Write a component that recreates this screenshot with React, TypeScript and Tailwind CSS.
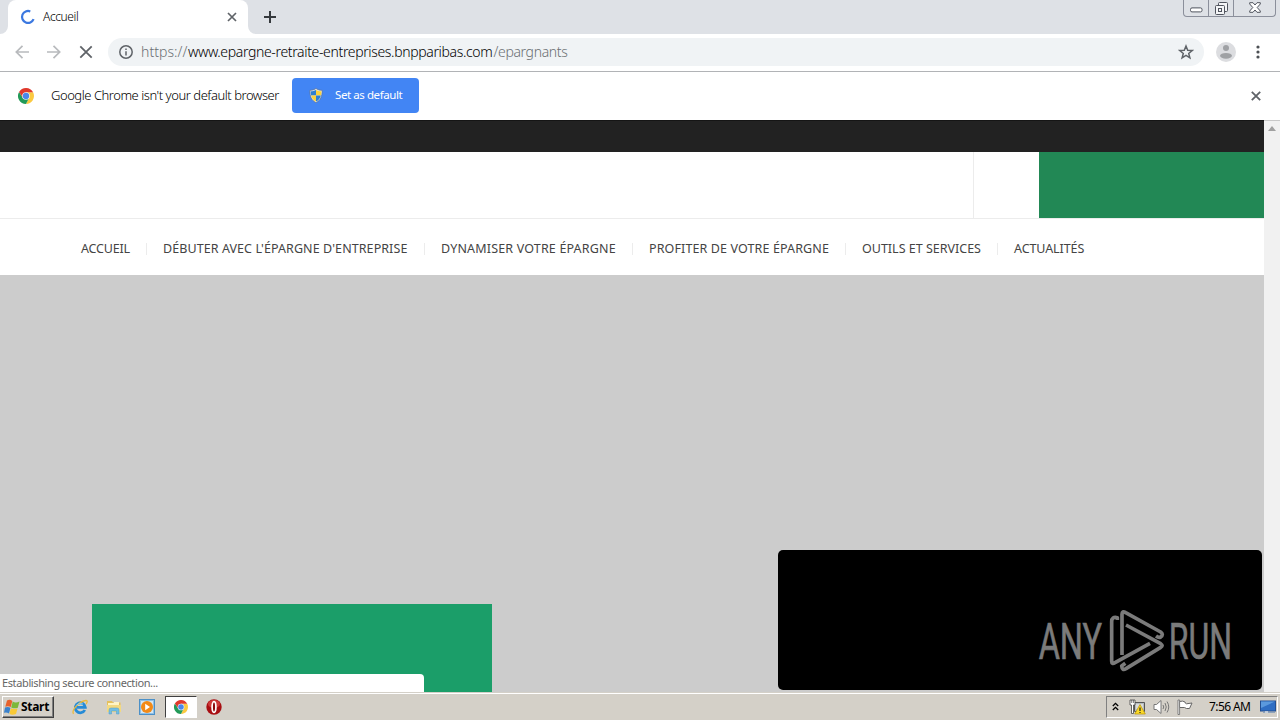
import type { ReactNode } from "react";

const NAV_ITEMS = [
  { label: "ACCUEIL", box: "w-[82px] tracking-[-0.2px]" },
  { label: "DÉBUTER AVEC L'ÉPARGNE D'ENTREPRISE", box: "w-[278px] tracking-[0.08px]" },
  { label: "DYNAMISER VOTRE ÉPARGNE", box: "w-[208px] tracking-[0.17px]" },
  { label: "PROFITER DE VOTRE ÉPARGNE", box: "w-[213px] tracking-[0.12px]" },
  { label: "OUTILS ET SERVICES", box: "w-[152px]" },
  { label: "ACTUALITÉS", box: "w-[90px] tracking-[-0.1px]" },
];

function ChromeLogo({ className }: { className: string }) {
  return (
    <svg viewBox="0 0 48 48" className={className}>
      <path d="M24 13 H45.3 A24 24 0 0 1 24 48 L33.5 29.5 Z" fill="#fbc940" />
      <path d="M14.5 29.5 L3.2 12 A24 24 0 0 0 24 48 L33.5 29.5 Z" fill="#229a58" />
      <path d="M3.2 12 A24 24 0 0 1 45.3 13 H24 L14.5 29.5 Z" fill="#e0392c" />
      <circle cx="24" cy="24" r="11.5" fill="#f4f6fa" />
      <circle cx="24" cy="24" r="9.500" fill="#4a86ea" />
    </svg>
  );
}

function Shield() {
  return (
    <svg viewBox="0 0 14 16" className="h-[15px] w-[14px]">
      <path d="M7 .5 C9 2 11 2.500 13.500 2.500 C13.500 9 12 13 7 15.500 C2 13 .5 9 .5 2.500 C3 2.500 5 2 7 .5Z" fill="#e8eef5" stroke="#68717a" strokeWidth=".7" />
      <path d="M7 2 V8 H1.800 C1.400 6.500 1.300 5 1.300 3.500 C3.500 3.500 5 3 7 2Z" fill="#2f7fd0" />
      <path d="M7 2 V8 H12.200 C12.600 6.500 12.700 5 12.700 3.500 C10.500 3.500 9 3 7 2Z" fill="#fbd23c" />
      <path d="M7 14.400 V8 H1.800 C2.500 11 4 13 7 14.400Z" fill="#fbd23c" />
      <path d="M7 14.400 V8 H12.200 C11.500 11 10 13 7 14.400Z" fill="#2f7fd0" />
    </svg>
  );
}

function TabStrip() {
  return (
    <div className="flex h-[34px] shrink-0 bg-[#dee1e6]">
      <svg viewBox="0 0 8 8" className="h-2 w-2 self-end">
        <path d="M8 0 V8 H0 A8 8 0 0 0 8 0Z" fill="#fff" />
      </svg>
      <div className="flex w-[240px] items-center rounded-t-lg bg-white pl-3">
        <svg viewBox="0 0 16 16" className="size-4" fill="none">
          <path d="M10.300 2.400 A6 6 0 1 0 13.600 10.200" stroke="#3b78e0" strokeWidth="2.200" />
        </svg>
        <span className="ml-[7px] w-[184px] text-[12px] leading-4 font-light tracking-[-0.4px] text-black">Accueil</span>
        <svg viewBox="0 0 10 10" className="size-[10px]">
          <path d="M1 1 L9 9 M9 1 L1 9" stroke="#5f6368" strokeWidth="1.700" />
        </svg>
      </div>
      <svg viewBox="0 0 8 8" className="h-2 w-2 self-end">
        <path d="M0 0 V8 H8 A8 8 0 0 1 0 0Z" fill="#fff" />
      </svg>
      <svg viewBox="0 0 12 12" className="mt-[11px] ml-2 size-3">
        <path d="M6 0 V12 M0 6 H12" stroke="#35393d" strokeWidth="2" />
      </svg>
      <div className="mr-1 ml-auto flex h-[17px] w-[93px] rounded-b-[4px] border border-t-0 border-[#8b8f9b] text-[#50545e]">
        <div className="flex w-[25px] justify-center border-r border-[#8b8f9b]">
          <svg viewBox="0 0 13 6" className="mt-[7px] h-[6px] w-[13px]">
            <rect x=".5" y=".9" width="11.500" height="4" rx="1.500" fill="#fff" stroke="currentColor" />
          </svg>
        </div>
        <div className="flex w-[25px] justify-center border-r border-[#8b8f9b]">
          <svg viewBox="0 0 13 13" className="mt-[2px] size-[13px]" fill="#f4f5f7" stroke="currentColor">
            <rect x="3.500" y=".5" width="9" height="9" rx="1" />
            <rect x=".5" y="3.500" width="9" height="9" rx="1" />
            <rect x="3.500" y="6.500" width="3" height="3" />
          </svg>
        </div>
        <div className="flex flex-1 justify-center">
          <svg viewBox="0 0 12 11" className="mt-[2px] h-[11px] w-3">
            <path d="M.7 .7 H4 L6 3 L8 .7 H11.300 V2 L8.200 5.500 L11.300 9 V10.300 H8 L6 8 L4 10.300 H.7 V9 L3.800 5.500 L.7 2Z" fill="#fff" stroke="currentColor" strokeWidth="1" />
          </svg>
        </div>
      </div>
    </div>
  );
}

function Toolbar() {
  return (
    <div className="flex h-[38px] shrink-0 items-center border-b border-[#b1b3b6] bg-white pb-px">
      <div className="flex w-[108px] gap-[18px] pl-[15px]">
        <svg viewBox="0 0 14 14" className="size-[14px]" fill="none" stroke="#b8babd" strokeWidth="1.700">
          <path d="M14 7 H1.500 M7.500 .8 L1.300 7 L7.500 13.200" />
        </svg>
        <svg viewBox="0 0 14 14" className="size-[14px]" fill="none" stroke="#b8babd" strokeWidth="1.700">
          <path d="M0 7 H12.500 M6.500 .8 L12.700 7 L6.500 13.200" />
        </svg>
        <svg viewBox="0 0 14 14" className="size-[14px]" fill="none" stroke="#5f6368" strokeWidth="1.800">
          <path d="M1.300 1.300 L12.700 12.700 M12.700 1.300 L1.300 12.700" />
        </svg>
      </div>
      <div className="flex h-7 w-[1096px] items-center rounded-full bg-[#f0f3f5] pr-[10px] pl-[11px]">
        <svg viewBox="0 0 14 14" className="size-[14px] shrink-0" fill="none" stroke="#5f6368">
          <circle cx="7" cy="7" r="6.200" strokeWidth="1.500" />
          <path d="M7 6.200 V10.600 M7 3.400 V5" strokeWidth="1.500" />
        </svg>
        <div className="ml-2 flex flex-1 text-[14px] leading-5 font-light whitespace-pre">
          <span className="w-[47px] tracking-[0.05px] text-[#6b6f73]">https://</span>
          <span className="w-[305.500px] tracking-[-0.350px] text-black">www.epargne-retraite-entreprises.bnpparibas.com</span>
          <span className="tracking-[-0.35px] text-[#6b6f73]">/epargnants</span>
        </div>
        <svg viewBox="0 0 16 16" className="size-4" fill="none">
          <path d="M8 2 L9.700 6.200 L14.200 6.500 L10.700 9.400 L11.900 13.800 L8 11.400 L4.100 13.800 L5.300 9.400 L1.800 6.500 L6.300 6.200Z" stroke="#5f6368" strokeWidth="1.500" />
        </svg>
      </div>
      <svg viewBox="0 0 20 20" className="ml-3 size-5">
        <circle cx="10" cy="10" r="10" fill="#dcdde0" />
        <circle cx="10" cy="6" r="3" fill="#9fa1a4" />
        <ellipse cx="10" cy="13.800" rx="6" ry="2.900" fill="#9fa1a4" />
      </svg>
      <svg viewBox="0 0 4 14" className="ml-5 h-[14px] w-1" fill="#4c5054">
        <circle cx="2" cy="2" r="1.600" />
        <circle cx="2" cy="7" r="1.600" />
        <circle cx="2" cy="12" r="1.600" />
      </svg>
    </div>
  );
}

function DefaultBrowserBar() {
  return (
    <div className="flex h-12 shrink-0 items-center bg-white">
      <ChromeLogo className="ml-[18px] size-4" />
      <span className="mb-[2px] ml-[17px] w-[241px] text-[13px] leading-5 font-light tracking-[-0.46px] whitespace-nowrap text-black">
        Google Chrome isn't your default browser
      </span>
      <button className="mb-px flex h-[35px] w-[127px] items-center rounded-[4px] bg-[#4285f4] pl-[17px] text-white">
        <Shield />
        <span className="mb-px ml-3 text-[11.500px] leading-4 tracking-[-0.42px] whitespace-nowrap">Set as default</span>
      </button>
      <svg viewBox="0 0 10 10" className="mr-[19px] ml-auto size-[10px]">
        <path d="M.8 .8 L9.200 9.200 M9.200 .8 L.8 9.200" stroke="#5f6368" strokeWidth="1.800" />
      </svg>
    </div>
  );
}

function SitePage() {
  return (
    <div className="flex flex-1 flex-col overflow-hidden bg-white">
      <div className="h-8 shrink-0 border-t border-[#151515] bg-[#222]" />
      <div className="flex h-[67px] shrink-0 border-b border-[#ececec]">
        <div className="w-[974px] border-r border-[#ececec]" />
        <div className="w-[65px]" />
        <div className="flex-1 bg-[#228855]" />
      </div>
      <nav className="flex h-14 shrink-0 items-center pt-1 pl-[81px]">
        {NAV_ITEMS.map((item, i) => (
          <div key={item.label} className={`flex shrink-0 items-center ${item.box}`}>
            <span className="text-[12.500px] leading-5 whitespace-nowrap text-[#444]">{item.label}</span>
            {i < NAV_ITEMS.length - 1 && <span className="mr-4 ml-auto h-3 w-px bg-[#ececec]" />}
          </div>
        ))}
      </nav>
      <main className="flex flex-1 items-end bg-[#ccc] pl-[92px]">
        <div className="h-[88px] w-[400px] bg-[#1b9e69]" />
      </main>
    </div>
  );
}

function AnyRunBadge() {
  return (
    <div className="absolute top-[550px] left-[778px] flex h-[140px] w-[484px] items-end justify-end rounded-[5px] bg-black pr-[21px] pb-[8px]">
      <svg viewBox="27 -5 636 252" className="h-[84px] w-[212px] overflow-visible">
        <g fill="#7b7b7b" stroke="#7b7b7b" strokeWidth="2" fontFamily="Roboto, sans-serif" fontSize="152">
          <text x="56" y="179" textLength="190" lengthAdjust="spacingAndGlyphs">ANY</text>
          <text x="446" y="179" textLength="190" lengthAdjust="spacingAndGlyphs">RUN</text>
        </g>
        <g fill="none" stroke="#7b7b7b" strokeWidth="11" strokeLinejoin="round">
          <path d="M292 61 V54 Q275 50 275 66 V185 Q275 195 285 189 L390 131" />
          <path d="M306 166 V44 Q306 32 317 39 L422 97 Q432 105 422 112 Q416 115 408 109" />
          <path d="M318 76 L422 132 Q431 138 422 143 L318 207 Q306 214 305 199 L316 191" />
        </g>
      </svg>
    </div>
  );
}

function TaskItem({ children, active = false }: { children: ReactNode; active?: boolean }) {
  return (
    <div
      className={
        active
          ? "flex h-[22px] w-8 items-center justify-center border border-t-[#404040] border-r-white border-b-white border-l-[#404040] bg-white"
          : "flex h-[22px] w-8 items-center justify-center"
      }
    >
      {children}
    </div>
  );
}

function Taskbar() {
  return (
    <div className="h-7 shrink-0 bg-[#d4d0c8] pt-px">
      <div className="flex h-[27px] items-center border-t border-white pl-[2px]">
        <div className="flex h-[22px] w-[52px] items-center border border-t-white border-r-[#404040] border-b-[#404040] border-l-white pl-px shadow-[inset_-1px_-1px_0_#808080]">
          <svg viewBox="0 0 16 16" className="h-4 w-4">
            <path d="M3 1.500 Q6 0 8.300 2 L6.800 8 Q4 6.500 1.300 7.800Z" fill="#e7622d" />
            <path d="M8.700 2.500 Q11.500 4.500 15.500 2.500 L13.800 8.700 Q10.500 10 7.200 8.400Z" fill="#7cb83a" />
            <path d="M1 8.400 Q4 7.200 6.500 8.800 L5 14.500 Q2.500 12.800 0 13.800Z" fill="#3b82cc" />
            <path d="M6.900 9.200 Q10 10.700 13.500 9.400 L12 15 Q8 16.500 5.400 14.800Z" fill="#f8c935" />
          </svg>
          <span className="ml-px text-[12px] leading-4 font-bold tracking-[-0.3px] text-black">Start</span>
        </div>
        <div className="ml-[10px] flex items-center gap-[1.600px]">
          <TaskItem>
            <svg viewBox="0 0 16 16" className="size-4" fill="none">
              <path d="M12.800 11 A5 5 0 1 1 13.300 8.300 H5" stroke="#268bd6" strokeWidth="2.800" />
              <path d="M1.500 14.800 C-1 11 8 2 14 1.500 C16 1.500 15 4 14 5" stroke="#ebb93b" strokeWidth="1.300" />
              <path d="M4.500 6 Q7 3.500 11 5" stroke="#83cef6" />
            </svg>
          </TaskItem>
          <TaskItem>
            <svg viewBox="0 0 16 16" className="size-4">
              <path d="M1 2 H6 L7 3.500 H14.500 V12 H1Z" fill="#e5c05c" />
              <path d="M2 4 H8 V3 H13 V7 H2Z" fill="#fff4c5" />
              <path d="M1 6 H15 V13 H1Z" fill="#f3d981" />
              <path d="M3 15 V11 Q3 9 5 9 H11 Q13 9 13 11 V15 H10.500 V12 H5.500 V15Z" fill="#73bde2" stroke="#4c9cc9" strokeWidth=".5" />
            </svg>
          </TaskItem>
          <TaskItem>
            <svg viewBox="0 0 16 16" className="size-4">
              <rect x=".5" y=".5" width="15" height="15" fill="#8fc0e6" stroke="#4c90c7" />
              <rect x="2" y="2" width="12" height="12" fill="#d5e7f3" />
              <circle cx="8" cy="8" r="6" fill="#f28a17" />
              <path d="M6.200 4.800 L11 8 L6.200 11.200Z" fill="#fff" />
            </svg>
          </TaskItem>
          <TaskItem active>
            <ChromeLogo className="size-[14px]" />
          </TaskItem>
          <TaskItem>
            <svg viewBox="0 0 16 16" className="size-4">
              <circle cx="8" cy="8" r="7.700" fill="#a80e12" />
              <ellipse cx="8" cy="5" rx="6" ry="4" fill="#cf3a3a" />
              <ellipse cx="8" cy="8" rx="1.900" ry="5.300" fill="#8c0a0d" stroke="#fff" strokeWidth="1.700" />
            </svg>
          </TaskItem>
        </div>
        <div className="mr-[2px] ml-auto flex h-[22px] w-[172px] items-center border border-t-[#808080] border-r-white border-b-white border-l-[#808080]">
          <svg viewBox="0 0 7 9" className="mb-[2px] ml-[5px] h-[9px] w-[7px]" fill="none" stroke="#000" strokeWidth="1.300">
            <path d="M.8 4 L3.500 1.300 L6.200 4 M.8 8 L3.500 5.300 L6.200 8" />
          </svg>
          <svg viewBox="0 0 17 16" className="ml-[10px] h-4 w-[17px]">
            <path d="M5.500 3.500 H15.500 V12.500 H5.500Z" fill="#b6bcc0" stroke="#555" />
            <path d="M7 5 H14 V10 H7Z" fill="#d9dadb" />
            <path d="M1 1 H6 V6 H4.500 V14.500 H2.500 V6 H1Z" fill="#fff" stroke="#444" strokeWidth=".8" />
            <path d="M2.700 1 V4 M4.400 1 V4" stroke="#444" strokeWidth=".7" />
            <path d="M11 5.500 L16.300 15 H5.700Z" fill="#fbd928" stroke="#b99400" strokeWidth=".7" />
            <path d="M11 8.500 V12 M11 13 V14" stroke="#222" strokeWidth="1.200" />
          </svg>
          <svg viewBox="0 0 17 16" className="ml-[7px] h-4 w-[17px]" fill="none" stroke="#777">
            <path d="M1 5.500 H3.500 L8 1.500 V14.500 L3.500 10.500 H1Z" fill="#fff" />
            <path d="M10 6 Q11.500 8 10 10 M12 4 Q14.500 8 12 12 M14 2.500 Q17.500 8 14 13.500" />
          </svg>
          <svg viewBox="0 0 16 16" className="ml-[7px] size-4" fill="#fff" stroke="#666">
            <path d="M2.500 2.500 Q6 1.500 8 3 Q8 4.500 9.500 4.800 L15 4 L12.500 9.500 Q9 10 7.500 8.500 L2.500 8.500Z" />
            <path d="M1 1 H2.600 V15.500 H1Z" strokeWidth=".8" />
          </svg>
          <span className="ml-[16px] w-[51px] text-[12px] leading-4 tracking-[-0.6px] whitespace-nowrap text-black">7:56 AM</span>
          <svg viewBox="0 0 16 14" className="h-[14px] w-4">
            <rect x=".5" y="1" width="15" height="10" fill="#2f6ec3" stroke="#234f92" />
            <path d="M1 1.500 H15 L1 8Z" fill="#5b99dd" />
            <path d="M3 12.500 H15" stroke="#90a4bb" />
            <path d="M5 12 H8" stroke="#fff" />
          </svg>
        </div>
      </div>
    </div>
  );
}

export default function App() {
  return (
    <div className="relative flex h-[720px] w-[1280px] flex-col overflow-hidden bg-white font-['Noto_Sans',sans-serif]">
      <TabStrip />
      <Toolbar />
      <DefaultBrowserBar />
      <div className="flex h-[572px] shrink-0">
        <SitePage />
        <div className="flex w-4 flex-col items-center border-t border-[#c8c8c8] bg-[#f1f1f1] pt-[5px]">
          <svg viewBox="0 0 8 5" className="h-[5px] w-2">
            <path d="M4 0 L8 5 H0Z" fill="#a0a0a0" />
          </svg>
        </div>
      </div>
      <Taskbar />
      <div className="absolute top-[674px] left-0 flex h-[18px] w-[424px] items-start rounded-tr-[4px] bg-white pt-px pl-[2px] text-[11px] leading-4 tracking-[-0.38px] text-[#666]">
        Establishing secure connection...
      </div>
      <AnyRunBadge />
    </div>
  );
}
